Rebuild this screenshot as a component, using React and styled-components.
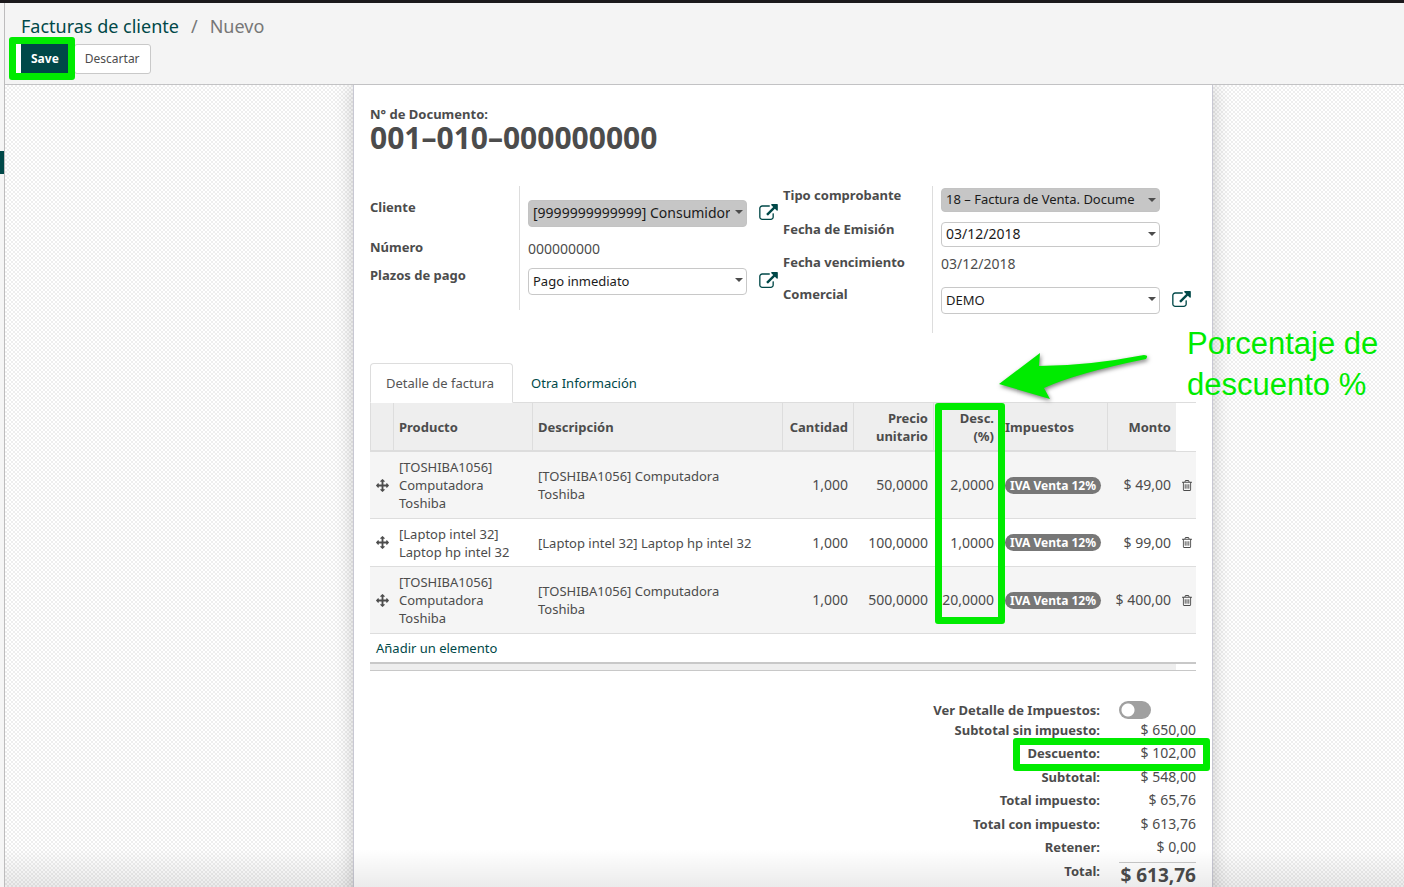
import React from "react";
import styled, { createGlobalStyle, css } from "styled-components";

const TEAL = "#004848";
const TEXT = "#4c4c4c";
const LINE = "#dddddd";
const GREEN = "#00eb00";

const GlobalStyle = createGlobalStyle`
  * {
    box-sizing: border-box;
  }

  body {
    margin: 0;
    overflow: hidden;
    font-family: "Noto Sans", "Open Sans", sans-serif;
    font-size: 13px;
    line-height: 18px;
    color: ${TEXT};
    background-color: #fff;
  }

  a {
    color: ${TEAL};
    text-decoration: none;
  }
`;

const Page = styled.div`
  position: relative;
  display: flex;
  height: 100vh;
  overflow: hidden;
  border-top: 3px solid #1b191c;
`;

const SideStrip = styled.aside`
  flex: none;
  width: 5px;
  padding-top: 148px;
  background-color: #f5f5f5;
  border-right: 1px solid #bdbcbd;

  span {
    display: block;
    height: 23px;
    background-color: ${TEAL};
  }
`;

const Main = styled.main`
  display: flex;
  flex: 1;
  flex-direction: column;
  min-width: 0;
`;

const ControlPanel = styled.header`
  flex: none;
  height: 82px;
  padding: 11px 16px 0;
  background-color: #f4f4f4;
  border-bottom: 1px solid #c2c2c4;
`;

const Breadcrumb = styled.nav`
  display: flex;
  gap: 12px;
  font-size: 18px;
  line-height: 24px;
  color: #777;
`;

const Buttons = styled.div`
  display: flex;
  gap: 5px;
  margin-top: 6px;
`;

const Button = styled.button`
  height: 30px;
  padding: 0 10px 2px;
  border: 1px solid #c9c9c9;
  border-radius: 3px;
  background-color: #fff;
  font-family: inherit;
  font-size: 12px;
  color: ${TEXT};

  ${({ $primary }) =>
    $primary &&
    css`
      padding: 0 9px 2px;
      border-color: ${TEAL};
      border-radius: 0;
      background-color: ${TEAL};
      font-weight: 700;
      color: #fff;
      box-shadow: -6px 0 0 #fff;
    `}
`;

/* green marker drawn over a part of the form */
const Marked = styled.div`
  position: relative;
`;

const Marker = styled.span`
  position: absolute;
  top: ${({ $top }) => $top}px;
  right: ${({ $right }) => $right}px;
  width: ${({ $width }) => $width}px;
  height: ${({ $height }) => $height}px;
  border: 7px solid ${GREEN};
  border-radius: 3px;
  pointer-events: none;
`;

const Canvas = styled.div`
  display: grid;
  flex: 1;
  grid-template-columns: 348fr 860px 191fr;
  min-height: 0;
  overflow: hidden;
  background: conic-gradient(#eeeeee 25%, #fff 0 50%, #eeeeee 0 75%, #fff 0) 0 0 / 4px 4px;
`;

const Sheet = styled.div`
  position: relative;
  grid-column: 2;
  height: 960px;
  padding: 20px 16px;
  background-color: #fff;
  border: solid #c8c8d3;
  border-width: 0 1px;
  box-shadow: 0 0 18px rgba(0, 0, 0, 0.2);
`;

const BottomShade = styled.div`
  position: absolute;
  right: 0;
  bottom: 0;
  left: 5px;
  height: 38px;
  background: linear-gradient(to bottom, rgba(0, 0, 0, 0), rgba(0, 0, 0, 0.08));
  pointer-events: none;
`;

const DocTitle = styled.div`
  strong {
    display: block;
  }

  h1 {
    margin: 0;
    font-size: 30px;
    line-height: 30px;
  }
`;

const Groups = styled.div`
  display: grid;
  grid-template-columns: 1fr 1fr;
  align-items: start;
  margin-top: 33px;
`;

const Row = styled.div`
  display: grid;
  grid-template-columns: 149px 1fr;
  min-height: ${({ $height }) => $height}px;

  label,
  b {
    padding-top: ${({ $offset }) => $offset || 0}px;
    font-weight: 700;
  }
`;

const Value = styled.div`
  display: flex;
  align-items: flex-start;
  gap: 12px;
  padding: ${({ $offset }) => ($offset || 0) + 2}px 0 0 8px;
  border-left: 1px solid ${LINE};
  font-size: 14px;

  svg {
    display: block;
  }
`;

const LinkButton = styled.button`
  margin-top: 4px;
  padding: 0;
  border: 0;
  background: none;
  color: ${TEAL};
`;

const FieldBox = styled.div`
  position: relative;
  width: 219px;

  select,
  input {
    display: block;
    width: 100%;
    height: ${({ $height }) => $height}px;
    padding: 0 16px 2px 4px;
    border: 1px solid ${({ $required }) => ($required ? "#c3c3c3" : "#c8c8c8")};
    border-radius: 4px;
    appearance: none;
    background-color: ${({ $required }) => ($required ? "#c6c6c6" : "#fff")};
    font-family: inherit;
    font-size: ${({ $size }) => $size || 13}px;
    color: #1b1b1b;
  }

  svg {
    position: absolute;
    top: 10px;
    right: 4px;
    pointer-events: none;
  }
`;

const Tabs = styled.div`
  display: flex;
  gap: 2px;
  margin-top: 30px;
  border-bottom: 1px solid ${LINE};
`;

const Tab = styled.a`
  height: 40px;
  margin-bottom: -1px;
  padding: 10px 18px 10px 15px;
  border: 1px solid ${({ $active }) => ($active ? LINE : "transparent")};
  border-bottom-color: ${({ $active }) => ($active ? "#fff" : "transparent")};
  border-radius: 4px 4px 0 0;

  ${({ $active }) =>
    $active &&
    css`
      color: #555;
    `}
`;

const Table = styled.table`
  width: 100%;
  table-layout: fixed;
  border-spacing: 0;

  th,
  td {
    padding: 5px;
    text-align: left;
  }

  th {
    height: 49px;
    border-bottom: 2px solid ${LINE};
    border-left: 1px solid ${LINE};
    background-color: #eee;
  }

  th:last-child {
    border-bottom-width: 1px;
    border-left: 0;
    background-color: #fff;
  }

  tbody td {
    padding-left: 6px;
    border-bottom: 1px solid ${LINE};
  }

  tbody tr:nth-child(odd) td {
    height: 67px;
    background-color: #f5f5f5;
  }

  tbody tr:nth-child(2) td {
    height: 48px;
  }

  tbody td.description {
    padding-right: 20px;
  }

  tbody tr:last-child td {
    border-bottom: 2px solid #c8c8c8;
  }

  tfoot td {
    height: 7px;
    padding: 0;
    border-bottom: 1px solid #c8c8c8;
    background-color: #eee;
  }

  tfoot td:last-child {
    background-color: #fff;
  }

  .num {
    text-align: right;
  }

  td.num {
    padding-left: 0;
    font-size: 14px;
    white-space: nowrap;
  }

  td:last-child {
    padding-right: 0;
  }

  svg {
    display: block;
  }
`;

const IconButton = styled.button`
  display: block;
  padding: 0;
  border: 0;
  background: none;
  color: ${TEXT};
`;

const Tag = styled.span`
  display: block;
  width: max-content;
  padding: 0 5px;
  border-radius: 9px;
  background-color: #777;
  font-size: 12px;
  line-height: 17px;
  font-weight: 700;
  color: #fff;
  white-space: nowrap;
`;

const Totals = styled.div`
  position: relative;
  display: grid;
  grid-template-columns: auto 77px;
  grid-template-rows: 20px;
  grid-auto-rows: 23px 24px;
  column-gap: 19px;
  justify-content: end;
  margin-top: 30px;
  text-align: right;

  label,
  b {
    font-weight: 700;
  }
`;

const Amount = styled.span`
  font-size: 14px;
`;

const GrandTotal = styled.strong`
  padding-top: 3px;
  border-top: 1px solid #c8c8c8;
  font-size: 19px;
`;

const Switch = styled.input`
  width: 32px;
  height: 18px;
  margin: 0;
  appearance: none;
  border-radius: 9px;
  background: radial-gradient(circle at 9px 9px, #fff 6px, #a0a0a0 7px);
  justify-self: start;
`;

const Arrow = styled.svg`
  position: absolute;
  top: 266px;
  left: 643px;
  filter: drop-shadow(1px 2px 2px rgba(0, 0, 0, 0.5));
`;

const Note = styled.p`
  position: absolute;
  top: 238px;
  left: 833px;
  margin: 0;
  font-family: "Liberation Sans", Arial, sans-serif;
  font-size: 31px;
  line-height: 41px;
  color: ${GREEN};
  white-space: nowrap;
`;

const Caret = () => (
  <svg width="8" height="4" viewBox="0 0 8 4">
    <path d="M0 0h8l-4 4z" fill={TEXT} />
  </svg>
);

const ExternalIcon = () => (
  <svg width="19" height="16" viewBox="0 0 1792 1536" fill="currentColor">
    <path d="M1408 928v320q0 119-84.5 203.5t-203.5 84.5h-832q-119 0-203.5-84.5t-84.5-203.5v-832q0-119 84.5-203.5t203.5-84.5h704q14 0 23 9t9 23v64q0 14-9 23t-23 9h-704q-66 0-113 47t-47 113v832q0 66 47 113t113 47h832q66 0 113-47t47-113v-320q0-14 9-23t23-9h64q14 0 23 9t9 23zm384-864v512q0 26-19 45t-45 19-45-19l-176-176-652 652q-10 10-23 10t-23-10l-114-114q-10-10-10-23t10-23l652-652-176-176q-19-19-19-45t19-45 45-19h512q26 0 45 19t19 45z" />
  </svg>
);

const MoveIcon = () => (
  <svg width="13" height="13" viewBox="0 0 1792 1792" fill="currentColor">
    <path d="M1792 896q0 26-19 45l-256 256q-19 19-45 19t-45-19-19-45v-128h-384v384h128q26 0 45 19t19 45-19 45l-256 256q-19 19-45 19t-45-19l-256-256q-19-19-19-45t19-45 45-19h128v-384h-384v128q0 26-19 45t-45 19-45-19l-256-256q-19-19-19-45t19-45l256-256q19-19 45-19t45 19 19 45v128h384v-384h-128q-26 0-45-19t-19-45 19-45l256-256q19-19 45-19t45 19l256 256q19 19 19 45t-19 45-45 19h-128v384h384v-128q0-26 19-45t45-19 45 19l256 256q19 19 19 45z" />
  </svg>
);

const TrashIcon = () => (
  <svg width="10" height="11" viewBox="192 128 1408 1536" fill="currentColor">
    <path d="M704 736v576q0 14-9 23t-23 9h-64q-14 0-23-9t-9-23v-576q0-14 9-23t23-9h64q14 0 23 9t9 23zm256 0v576q0 14-9 23t-23 9h-64q-14 0-23-9t-9-23v-576q0-14 9-23t23-9h64q14 0 23 9t9 23zm256 0v576q0 14-9 23t-23 9h-64q-14 0-23-9t-9-23v-576q0-14 9-23t23-9h64q14 0 23 9t9 23zm128 724v-948h-896v948q0 22 7 40.5t14.5 27 10.5 8.5h832q3 0 10.5-8.5t14.5-27 7-40.5zm-672-1076h448l-48-117q-7-9-17-11h-317q-10 2-17 11zm928 32v64q0 14-9 23t-23 9h-96v948q0 83-47 143.5t-113 60.5h-832q-66 0-113-58.5t-47-141.5v-952h-96q-14 0-23-9t-9-23v-64q0-14 9-23t23-9h309l70-167q15-37 54-63t79-26h320q40 0 79 26t54 63l70 167h309q14 0 23 9t9 23z" />
  </svg>
);

const leftFields = [
  { id: "cliente", label: "Cliente", value: "[9999999999999] Consumidor", type: "select", required: true, link: true, box: 27, size: 14, height: 52, offset: 12 },
  { id: "numero", label: "Número", value: "000000000", height: 28 },
  { id: "plazos", label: "Plazos de pago", value: "Pago inmediato", type: "select", link: true, box: 27, height: 44 },
];

const rightFields = [
  { id: "tipo", label: "Tipo comprobante", value: "18 – Factura de Venta. Docume", type: "select", required: true, box: 24, height: 34 },
  { id: "emision", label: "Fecha de Emisión", value: "03/12/2018", type: "input", box: 25, size: 14, height: 33 },
  { id: "vencimiento", label: "Fecha vencimiento", value: "03/12/2018", height: 32 },
  { id: "comercial", label: "Comercial", value: "DEMO", type: "select", link: true, box: 27, height: 48 },
];

const lines = [
  { product: "[TOSHIBA1056] Computadora Toshiba", qty: "1,000", price: "50,0000", discount: "2,0000", amount: "$ 49,00" },
  { product: "[Laptop intel 32] Laptop hp intel 32", qty: "1,000", price: "100,0000", discount: "1,0000", amount: "$ 99,00" },
  { product: "[TOSHIBA1056] Computadora Toshiba", qty: "1,000", price: "500,0000", discount: "20,0000", amount: "$ 400,00" },
];

const totals = [
  ["Subtotal sin impuesto:", "$ 650,00"],
  ["Descuento:", "$ 102,00"],
  ["Subtotal:", "$ 548,00"],
  ["Total impuesto:", "$ 65,76"],
  ["Total con impuesto:", "$ 613,76"],
  ["Retener:", "$ 0,00"],
];

const Field = ({ field }) => (
  <Row $height={field.height} $offset={field.offset}>
    {field.type ? <label htmlFor={field.id}>{field.label}</label> : <b>{field.label}</b>}
    <Value $offset={field.offset}>
      {field.type ? (
        <FieldBox $height={field.box} $required={field.required} $size={field.size}>
          {field.type === "select" ? (
            <select id={field.id}>
              <option>{field.value}</option>
            </select>
          ) : (
            <input id={field.id} type="text" defaultValue={field.value} />
          )}
          <Caret />
        </FieldBox>
      ) : (
        <span>{field.value}</span>
      )}
      {field.link && (
        <LinkButton type="button" aria-label={field.label}>
          <ExternalIcon />
        </LinkButton>
      )}
    </Value>
  </Row>
);

const InvoiceLines = () => (
  <Table>
    <colgroup>
      <col width="23" />
      <col width="139" />
      <col />
      <col width="71" />
      <col width="80" />
      <col width="66" />
      <col width="108" />
      <col width="69" />
      <col width="20" />
    </colgroup>
    <thead>
      <tr>
        <th></th>
        <th>Producto</th>
        <th>Descripción</th>
        <th className="num">Cantidad</th>
        <th className="num">Precio unitario</th>
        <th className="num">Desc. (%)</th>
        <th>Impuestos</th>
        <th className="num">Monto</th>
        <th></th>
      </tr>
    </thead>
    <tbody>
      {lines.map((line, i) => (
        <tr key={i}>
          <td><MoveIcon /></td>
          <td>{line.product}</td>
          <td className="description">{line.product}</td>
          <td className="num">{line.qty}</td>
          <td className="num">{line.price}</td>
          <td className="num">{line.discount}</td>
          <td><Tag>IVA Venta 12%</Tag></td>
          <td className="num">{line.amount}</td>
          <td>
            <IconButton type="button" aria-label="Eliminar">
              <TrashIcon />
            </IconButton>
          </td>
        </tr>
      ))}
      <tr>
        <td colSpan="9"><a href="#add">Añadir un elemento</a></td>
      </tr>
    </tbody>
    <tfoot>
      <tr>
        <td colSpan="8"></td>
        <td></td>
      </tr>
    </tfoot>
  </Table>
);

const App = () => {
  return (
    <>
      <GlobalStyle />
      <Page>
        <SideStrip>
          <span></span>
        </SideStrip>
        <Main>
          <ControlPanel>
            <Breadcrumb>
              <a href="#facturas">Facturas de cliente</a>
              <span>/</span>
              <span>Nuevo</span>
            </Breadcrumb>
            <Buttons>
              <Marked>
                <Button type="button" $primary>Save</Button>
                <Marker $top={-7} $right={-6} $width={66} $height={43} />
              </Marked>
              <Button type="button">Descartar</Button>
            </Buttons>
          </ControlPanel>

          <Canvas>
            <Sheet>
              <DocTitle>
                <strong>N° de Documento:</strong>
                <h1>001–010–000000000</h1>
              </DocTitle>

              <Groups>
                <div>
                  {leftFields.map((field) => <Field key={field.id} field={field} />)}
                </div>
                <div>
                  {rightFields.map((field) => <Field key={field.id} field={field} />)}
                </div>
              </Groups>

              <Tabs>
                <Tab href="#detalle" $active>Detalle de factura</Tab>
                <Tab href="#otra">Otra Información</Tab>
              </Tabs>
              <Marked>
                <InvoiceLines />
                <Marker $top={0} $right={191} $width={70} $height={221} />
              </Marked>

              <Totals>
                <label htmlFor="taxes">Ver Detalle de Impuestos:</label>
                <Switch id="taxes" type="checkbox" />
                {totals.map(([label, amount]) => (
                  <React.Fragment key={label}>
                    <b>{label}</b>
                    <Amount>{amount}</Amount>
                  </React.Fragment>
                ))}
                <b>Total:</b>
                <GrandTotal>$ 613,76</GrandTotal>
                <Marker $top={37} $right={-14} $width={197} $height={33} />
              </Totals>

              <Arrow width="152" height="52" viewBox="0 0 152 52">
                <path d="M2 33L43 2L42 15Q90 15 147 4Q152 4 149 8Q80 22 47 37L53 48Z" fill={GREEN} />
              </Arrow>
              <Note>
                Porcentaje de
                <br />
                descuento %
              </Note>
            </Sheet>
          </Canvas>
        </Main>
        <BottomShade />
      </Page>
    </>
  );
};

export default App;
